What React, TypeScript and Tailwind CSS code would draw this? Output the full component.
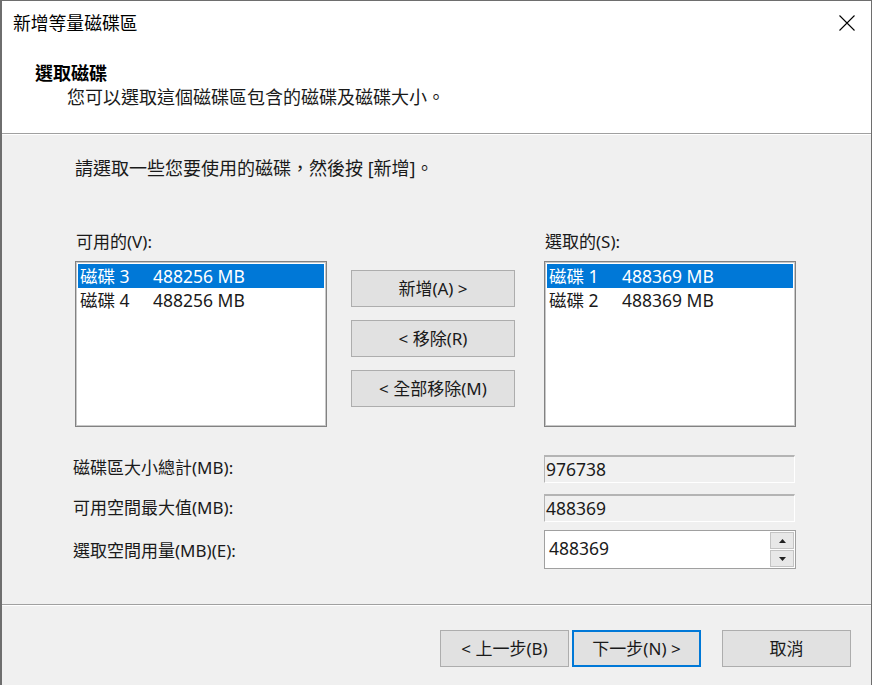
const font = { fontFamily: "'Noto Sans', 'Noto Sans CJK TC', sans-serif" };

function ListBox({ items }: { items: { disk: string; size: string; selected?: boolean }[] }) {
    return (
        <div className="w-[252px] h-[166px] bg-white border border-[#828282] outline outline-1 outline-[#c8c8c8] -outline-offset-2 p-[2px]">
            {items.map((it) => (
                <div
                    key={it.disk}
                    className={`flex h-[24px] items-center pl-[2px] text-[17.5px] leading-[24px] ${it.selected ? "bg-[#0078d7] text-white" : "text-[#1a1a1a]"}`}
                >
                    <span className="w-[73px]">{it.disk}</span>
                    <span>{it.size}</span>
                </div>
            ))}
        </div>
    );
}

function Btn({ label, w = "w-[164px]", primary = false }: { label: string; w?: string; primary?: boolean }) {
    return (
        <div
            className={`${w} h-[37px] flex items-center justify-center bg-[#e1e1e1] text-[17px] text-[#1a1a1a] ${primary ? "border-2 border-[#0078d7]" : "border border-[#adadad]"}`}
        >
            {label}
        </div>
    );
}

function ReadField({ value }: { value: string }) {
    return (
        <div className="w-[251px] h-[28px] flex items-center bg-[#f0f0f0] border-t-2 border-l border-[#b4b4b4] border-b border-r border-b-white border-r-white text-[17.5px] text-[#1a1a1a] pl-[1px]">
            {value}
        </div>
    );
}

export default function App() {
    return (
        <div style={font} className="w-[872px] h-[685px] flex flex-col bg-[#f0f0f0] border-t border-l-2 border-r border-[#6e6e6e] overflow-hidden">
            {/* title + header */}
            <div className="h-[132px] bg-white flex flex-col">
                <div className="h-[44px] flex items-center justify-between pl-[11px] pr-[16px]">
                    <span className="text-[17.8px] text-black">新增等量磁碟區</span>
                    <svg width="16" height="16" viewBox="0 0 16 16">
                        <path d="M0.5 0.5 L15.5 15.5 M15.5 0.5 L0.5 15.5" stroke="#000" strokeWidth="1.1" />
                    </svg>
                </div>
                <div className="pl-[33px] pt-[16px] text-[18px] leading-[24px] font-bold text-black">選取磁碟</div>
                <div className="pl-[65px] text-[18px] leading-[24px] text-[#1a1a1a]">您可以選取這個磁碟區包含的磁碟及磁碟大小。</div>
            </div>
            <div className="h-[1px] bg-[#a0a0a0]" />
            <div className="h-[1px] bg-white" />

            {/* body */}
            <div className="h-[469px] flex flex-col pl-[73px] pt-[21px]">
                <div className="text-[18px] leading-[24px] text-[#1a1a1a]">請選取一些您要使用的磁碟，然後按 [新增]。</div>

                <div className="flex mt-[50px]">
                    <div className="flex flex-col">
                        <div className="h-[24px] pl-[1px] text-[17px] leading-[24px] text-[#1a1a1a]">可用的(V):</div>
                        <div className="mt-[7px]">
                            <ListBox items={[{ disk: "磁碟 3", size: "488256 MB", selected: true }, { disk: "磁碟 4", size: "488256 MB" }]} />
                        </div>
                    </div>
                    <div className="flex flex-col gap-[13px] ml-[24px] mt-[40px]">
                        <Btn label="新增(A) >" />
                        <Btn label="< 移除(R)" />
                        <Btn label="< 全部移除(M)" />
                    </div>
                    <div className="flex flex-col ml-[29px]">
                        <div className="h-[24px] pl-[1px] text-[17px] leading-[24px] text-[#1a1a1a]">選取的(S):</div>
                        <div className="mt-[7px]">
                            <ListBox items={[{ disk: "磁碟 1", size: "488369 MB", selected: true }, { disk: "磁碟 2", size: "488369 MB" }]} />
                        </div>
                    </div>
                </div>

                <div className="grid grid-cols-[471px_252px] gap-y-[11px] mt-[28px] -ml-[2px] text-[17px] text-[#1a1a1a]">
                    <div className="flex items-center h-[28px] -translate-y-[1px]">磁碟區大小總計(MB):</div>
                    <ReadField value="976738" />
                    <div className="flex items-center h-[28px]">可用空間最大值(MB):</div>
                    <ReadField value="488369" />
                    <div className="flex items-center h-[39px] -mt-[3px] translate-y-[1px]">選取空間用量(MB)(E):</div>
                    <div className="-mt-[3px] w-[252px] h-[39px] flex bg-white border border-[#a0a0a0] text-[17.5px]">
                        <div className="flex-1 flex items-center pl-[4px] -translate-y-[1px]">488369</div>
                        <div className="w-[26px] flex flex-col p-[1px] gap-[1px]">
                            <div className="flex-1 flex items-center justify-center bg-[#e8e8e8] border border-[#c4c4c4]">
                                <svg width="7" height="4" viewBox="0 0 7 4"><path d="M3.5 0 L7 4 L0 4 Z" fill="#222" /></svg>
                            </div>
                            <div className="flex-1 flex items-center justify-center bg-[#e8e8e8] border border-[#c4c4c4]">
                                <svg width="7" height="4" viewBox="0 0 7 4"><path d="M0 0 L7 0 L3.5 4 Z" fill="#222" /></svg>
                            </div>
                        </div>
                    </div>
                </div>
            </div>

            {/* footer */}
            <div className="h-[1px] bg-[#a0a0a0]" />
            <div className="h-[1px] bg-white" />
            <div className="flex-1 flex justify-end items-start pt-[24px] pr-[20px]">
                <Btn label="< 上一步(B)" w="w-[129px]" />
                <div className="ml-[3px]">
                    <Btn label="下一步(N) >" w="w-[129px]" primary />
                </div>
                <div className="ml-[21px]">
                    <Btn label="取消" w="w-[129px]" />
                </div>
            </div>
        </div>
    );
}
